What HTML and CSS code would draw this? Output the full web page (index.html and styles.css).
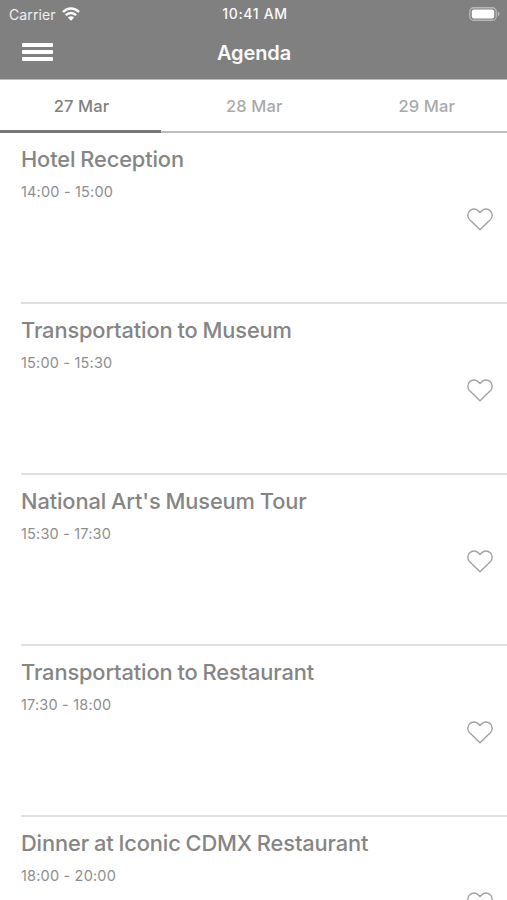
FILE: index.html
```html
<!DOCTYPE html>
<html lang="en">
<head>
<meta charset="utf-8">
<title>Agenda</title>
<link rel="stylesheet" href="styles.css">
</head>
<body>
<svg class="defs" aria-hidden="true">
  <symbol id="heart" viewBox="0 0 26 23">
    <path d="M13 21.8 L2.7 11.8 C0.2 9.2 0.2 5 2.7 2.7 C5.2 0.3 8.9 0.4 11.2 2.7 L13 4.6 L14.8 2.7 C17.1 0.4 20.8 0.3 23.3 2.7 C25.8 5 25.8 9.2 23.3 11.8 Z"/>
  </symbol>
</svg>
<header class="header">
  <div class="status">
    <div class="carrier"><span>Carrier</span>
      <svg class="wifi" viewBox="0 0 18 14"><path class="arc" d="M1 5 C5.5 0.3 12.5 0.3 17 5"/><path class="arc" d="M3.8 8.2 C6.8 5.2 11.2 5.2 14.2 8.2"/><path class="dot" d="M9 13.8 L5.8 10.6 C7.6 8.9 10.4 8.9 12.2 10.6 Z"/></svg>
    </div>
    <div class="clock">10:41 AM</div>
    <svg class="battery" viewBox="0 0 31 14"><rect class="shell" x=".75" y=".75" width="26.5" height="12.5" rx="4"/><rect class="level" x="2.8" y="2.5" width="22.4" height="9" rx="2"/><path class="tip" d="M28.8 4.5 C31 5.2 31 8.8 28.8 9.5 Z"/></svg>
  </div>
  <div class="navbar">
    <div class="menu"><i></i><i></i><i></i></div>
    <h1 class="title">Agenda</h1>
  </div>
</header>
<nav class="tabs">
  <a class="tab active">27 Mar</a>
  <a class="tab">28 Mar</a>
  <a class="tab">29 Mar</a>
</nav>
<main class="list">
  <article class="event"><div><h2 class="name">Hotel Reception</h2><p class="time">14:00 - 15:00</p></div><svg class="heart"><use href="#heart"/></svg></article>
  <article class="event"><div><h2 class="name">Transportation to Museum</h2><p class="time">15:00 - 15:30</p></div><svg class="heart"><use href="#heart"/></svg></article>
  <article class="event"><div><h2 class="name">National Art's Museum Tour</h2><p class="time">15:30 - 17:30</p></div><svg class="heart"><use href="#heart"/></svg></article>
  <article class="event"><div><h2 class="name">Transportation to Restaurant</h2><p class="time">17:30 - 18:00</p></div><svg class="heart"><use href="#heart"/></svg></article>
  <article class="event"><div><h2 class="name">Dinner at Iconic CDMX Restaurant</h2><p class="time">18:00 - 20:00</p></div><svg class="heart"><use href="#heart"/></svg></article>
</main>
</body>
</html>
```
FILE: styles.css
```css
* { box-sizing: border-box; }
html { height: 900px; overflow: hidden; }
body { margin: 0; height: 900px; overflow: hidden; background: #fff; color: #858585; font-family: Inter, "Liberation Sans", sans-serif; }
h1, h2, p { margin: 0; }
.defs { display: none; }
.header { height: 79px; background: #808080; color: #fff; }
.status { display: grid; grid-template-columns: 1fr auto 1fr; height: 27px; padding: 0 7px 0 9px; align-items: center; }
.carrier { display: flex; align-items: center; gap: 6px; font-size: 14px; line-height: 27px; letter-spacing: .1px; color: #f0f0f0; }
.wifi { width: 18px; height: 14px; margin-top: -1px; }
.arc { fill: none; stroke: #fff; stroke-width: 2.4; }
.dot, .level { fill: #fff; }
.clock { font-size: 14px; line-height: 28px; font-weight: 500; letter-spacing: .65px; margin-right: -1px; color: #fafafa; }
.battery { width: 31px; height: 14px; margin-top: -1px; justify-self: end; }
.shell { fill: none; stroke: #b8b8b8; stroke-width: 1.3; }
.tip { fill: #b8b8b8; }
.navbar { display: grid; grid-template-columns: 1fr auto 1fr; height: 50px; padding: 0 21px 0 22px; align-items: center; }
.menu { display: flex; flex-direction: column; gap: 3px; width: 31px; }
.menu i { height: 4px; background: #fff; border-radius: 1px; }
.title { font-size: 20px; line-height: 26px; font-weight: 600; letter-spacing: -.1px; padding-top: 1px; color: #fafafa; }
.tabs { display: flex; height: 54px; border-top: 1px solid #bdbdbd; border-bottom: 2px solid #bcbcbc; }
.tab { flex: 0 0 172.5px; height: 53px; line-height: 53px; text-align: center; font-size: 16.5px; letter-spacing: .1px; font-weight: 450; color: #aaa; }
.active { flex-basis: 161px; margin-right: 7px; padding-left: 2px; color: #808080; border-bottom: 3px solid #777; }
.list { padding-left: 21px; }
.event { display: flex; justify-content: space-between; height: 171px; padding: 12px 14px 0 0; border-bottom: 2px solid #e0e0e0; }
.event:last-child { height: 84px; overflow: hidden; border-bottom: 0; }
.name { font-size: 21.8px; line-height: 28px; font-weight: 550; letter-spacing: -.11px; word-spacing: -.8px; white-space: nowrap; }
.time { margin-top: 9px; font-size: 14.5px; line-height: 20px; letter-spacing: .18px; color: #8e8e8e; }
.heart { flex: none; width: 26px; height: 23px; margin-top: 63px; fill: none; stroke: #a2a2a2; stroke-width: 1.4; }
```
